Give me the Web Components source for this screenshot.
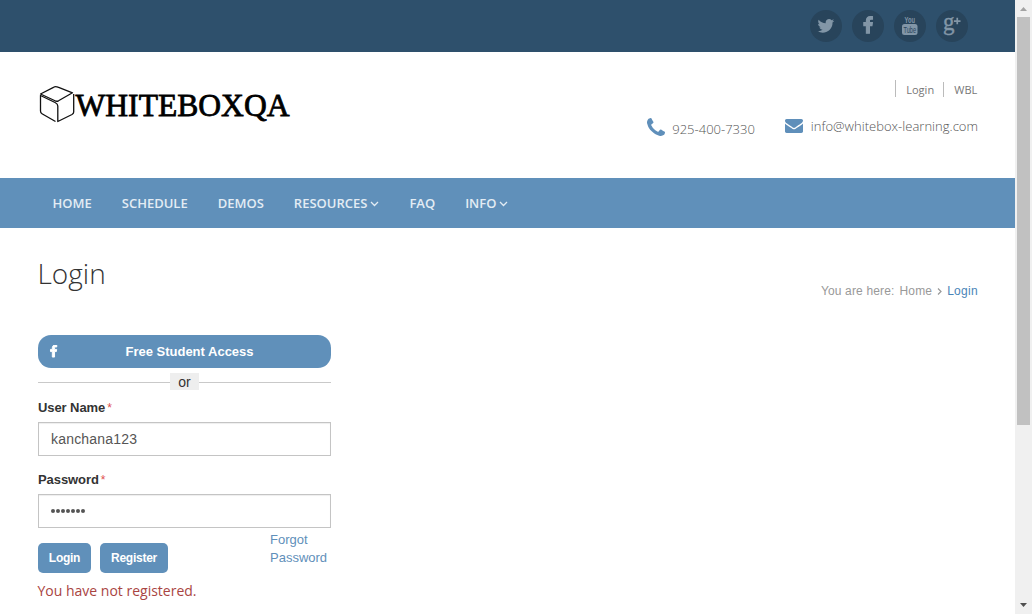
<!DOCTYPE html>
<html lang="en">
<head>
<meta charset="utf-8">
<title>Login</title>
<style>
html,body{margin:0;height:100%;overflow:hidden;background:#fff}
body{font-family:"Open Sans",sans-serif;color:#777}
</style>
</head>
<body>
<wb-page></wb-page>
<script>
function define(name, html) {
  customElements.define(name, class extends HTMLElement {
    constructor() {
      super();
      this.attachShadow({ mode: 'open' }).innerHTML = html;
    }
  });
}

define('social-link', `<style>
:host{display:flex;width:32px;height:32px;border-radius:50%;background:#28445b;color:#8296a7;align-items:center;justify-content:center}
</style><slot></slot>`);

define('top-bar', `<style>
:host{display:flex;justify-content:flex-end;gap:10px;height:52px;box-sizing:border-box;padding:10px 47px 0 0;background:#2e506c}
svg{display:block;fill:currentColor;overflow:visible}
</style>
<social-link><svg width="19" height="19" viewBox="60 60 1792 1792"><path d="M1684 408q-67 98-162 167 1 14 1 42 0 130-38 259.500t-115.500 248.500-184.500 210.500-258 146-323 54.500q-271 0-496-145 35 4 78 4 225 0 401-138-105-2-188-64.500t-114-159.500q33 5 61 5 43 0 85-11-112-23-185.500-111.500t-73.500-205.500v-4q68 38 146 41-66-44-105-115t-39-154q0-88 44-163 121 149 294.500 238.500t371.500 99.500q-8-38-8-74 0-134 94.500-228.500t228.500-94.500q140 0 236 102 109-21 205-78-37 115-142 178 93-10 186-50z"/></svg></social-link>
<social-link><svg width="18" height="18" viewBox="0 50 1792 1792"><path stroke="currentColor" stroke-width="110" d="M1343 12v264h-157q-86 0-116 36t-30 108v189h293l-39 296h-254v759h-306v-759h-255v-296h255v-218q0-186 104-288.500t277-102.500q147 0 228 12z"/></svg></social-link>
<social-link><svg width="32" height="32" viewBox="0 0 32 32"><text x="10.500" y="13.200" font-family="Liberation Sans" font-weight="bold" font-size="9.500" textLength="10.500" lengthAdjust="spacingAndGlyphs">You</text><rect x="8" y="14" width="15.500" height="11" rx="2.500"/><text x="9.500" y="22.700" fill="#28445b" font-family="Liberation Sans" font-size="9" textLength="12.500" lengthAdjust="spacingAndGlyphs">Tube</text></svg></social-link>
<social-link><svg width="32" height="32" viewBox="0 0 32 32"><text x="7" y="20" font-family="Liberation Serif" font-size="25" stroke="currentColor" stroke-width=".4" textLength="11.500" lengthAdjust="spacingAndGlyphs">g</text><path d="M18 10.200h6.500v1.700H18zM20.400 7.700h1.700v6.500h-1.700z"/></svg></social-link>`);

define('site-logo', `<style>:host{display:block;width:252px;height:40px}svg{display:block;overflow:visible}</style>
<svg width="252" height="40" viewBox="0 0 252 40"><g fill="none" stroke="#111" stroke-width="1.300" stroke-linejoin="round"><path d="M2.500 10 L15.500 3.300Q17.500 2 20 3.200L34.500 8.800 20.500 16.800Q18.500 17.800 16.500 16.500Z"/><path d="M17.500 37.500 4 29.800Q2.500 29 2.500 27V11.500L17 18.500Q19.800 19.800 19.800 22V37.500L34 30.500Q35.700 29.500 35.700 28V10"/></g><text x="37.500" y="31.500" font-family="Liberation Serif" font-size="32.500" fill="#000" stroke="#000" stroke-width=".8" textLength="214" lengthAdjust="spacingAndGlyphs">WHITEBOXQA</text></svg>`);

define('site-header', `<style>
:host{display:flex;justify-content:space-between;height:126px;box-sizing:border-box;padding:0 37px 0 38px}
site-logo{margin-top:32px}
.right{display:flex;flex-direction:column;align-items:flex-end}
.links{display:flex;font-size:11px;line-height:16px;margin-top:28px;height:18px;letter-spacing:.05px}
.links span{border-left:1px solid #bbb;padding-left:10px;height:17px;padding-top:2px;box-sizing:border-box;margin-left:9px}
.links span+span{margin-top:2px;padding-top:0;height:15px;line-height:15px;padding-right:.6px}
.contact{display:flex;margin-top:17px;font-size:13px;font-weight:300;line-height:20px;color:#555}
.contact div{display:flex}
.tel{margin:4px 30px 0 0;gap:7px}.mail{gap:8px;margin-top:1px;letter-spacing:.02px}
svg{fill:#5f8fba;display:block}
</style>
<site-logo></site-logo>
<div class="right">
<div class="links"><span>Login</span><span>WBL</span></div>
<div class="contact"><div class="tel"><svg style="margin-top:-1px" width="18" height="18" viewBox="192 128 1408 1408"><path d="M1600 1240q0 27-10 70.500t-21 68.500q-21 50-122 106-94 51-186 51-27 0-53-3.500t-57.500-12.500-47-14.500-55.500-20.500-49-18q-98-35-175-83-127-79-264-216t-216-264q-48-77-83-175-3-9-18-49t-20.500-55.500-14.500-47-12.500-57.500-3.500-53q0-92 51-186 56-101 106-122 25-11 68.500-21t70.500-10q14 0 21 3 18 6 53 76 11 19 30 54t35 63.500 31 53.500q3 4 17.500 25t21.500 35.500 7 28.500q0 20-28.500 50t-62 55-62 53-28.500 46q0 9 5 22.500t8.500 20.500 14 24 11.500 19q76 137 174 235t235 174q2 1 19 11.500t24 14 20.500 8.500 22.500 5q18 0 46-28.500t53-62 55-62 50-28.500q14 0 28.500 7t35.500 21.500 25 17.500q25 15 53.500 31t63.500 35 54 30q70 35 76 53 3 7 3 21z"/></svg><span>925-400-7330</span></div>
<div class="mail"><svg style="margin-top:3px" width="18" height="14" viewBox="0 256 1792 1408" preserveAspectRatio="none"><path d="M1792 710v794q0 66-47 113t-113 47h-1472q-66 0-113-47t-47-113v-794q44 49 101 87 362 246 497 345 57 42 92.500 65.500t94.500 48 110 24.500h2q51 0 110-24.500t94.500-48 92.500-65.500q170-123 498-345 57-39 100-87zm0-294q0 79-49 151t-122 123q-376 261-468 325-10 7-42.500 31t-54 38.500-52 32.500-57.500 27-50 9h-2q-23 0-50-9t-57.500-27-52-32.500-54-38.500-42.500-31q-91-64-262-182.500t-205-142.500q-62-42-117-115.500t-55-136.500q0-78 41.500-130t118.500-52h1472q65 0 112.500 47t47.500 113z"/></svg><span>info@whitebox-learning.com</span></div></div>
</div>`);

define('nav-item', `<style>
:host{display:flex;align-items:center;gap:3px}
svg{display:none;fill:none;stroke:currentColor;stroke-width:1.300;margin-top:1px}
:host([menu]) svg{display:block}
</style><slot></slot><svg width="9" height="6" viewBox="0 0 9 6"><path d="M1 1l3.500 3.500L8 1"/></svg>`);

define('nav-bar', `<style>
:host{display:flex;gap:30px;height:50px;padding-left:52.500px;background:#6090ba;color:#e3ecf4;font-size:13px;font-weight:600}
</style><nav-item>HOME</nav-item><nav-item>SCHEDULE</nav-item><nav-item>DEMOS</nav-item><nav-item menu>RESOURCES</nav-item><nav-item>FAQ</nav-item><nav-item menu>INFO</nav-item>`);

define('page-title', `<style>
:host{display:flex;justify-content:space-between;height:107px;box-sizing:border-box;padding:25px 37px 0 37.500px}
h1{margin:0;font-size:28px;line-height:40px;font-weight:300;color:#333}
.crumbs{display:flex;margin-top:30px;font:12px/16px "Liberation Sans",sans-serif;letter-spacing:.15px;color:#999;height:16px}
.crumbs svg{margin:5px 5px 0 5px}
b{font-weight:400;color:#4a84b8;letter-spacing:.3px}
</style><h1>Login</h1><div class="crumbs"><span style="margin-right:5px">You are here:</span><span>Home</span><svg width="5" height="7" viewBox="0 0 5 7" fill="none" stroke="#999" stroke-width="1.200"><path d="M1 .5l3 3-3 3"/></svg><b>Login</b></div>`);

define('text-field', `<style>
:host{display:block;margin-bottom:14px;font-family:"Liberation Sans",sans-serif}
.label{display:block;font-size:13px;font-weight:700;line-height:18px;height:18px;padding-top:1px;color:#333;letter-spacing:-.08px}
i{font-style:normal;font-weight:400;font-size:12px;color:#e04f4f;margin-left:2px;vertical-align:0}
.box{display:flex;align-items:center;height:34px;box-sizing:border-box;border:1px solid #c4c4c4;padding:0 12px;margin-top:5px;font-size:14px;letter-spacing:.2px;color:#555;box-shadow:inset 0 1px 1px rgba(0,0,0,.07)}
</style><span class="label"><slot name="label"></slot><i>*</i></span><div class="box"><slot></slot></div>`);

define('push-button', `<style>
:host{display:flex;align-items:center;justify-content:center;height:30px;border-radius:5px;background:#6090ba;color:#fff;font:bold 12px "Liberation Sans",sans-serif;letter-spacing:-.25px}
</style><slot></slot>`);

define('login-form', `<style>
:host{display:block;width:293px;margin-left:38px;font-family:"Liberation Sans",sans-serif}
.fb{display:grid;grid-template-columns:30px 1fr 20px;align-items:center;height:33px;border-radius:13px;background:#6090ba;color:#fff;font-size:13px;font-weight:700;text-align:center}
.fb svg{fill:#fff;stroke:#fff;stroke-width:130;margin-left:9px}
.or{display:grid;grid-template-columns:1fr 29px 1fr;align-items:center;margin:5px 0 7px;height:18px;font-size:14px;color:#333;text-align:center}
.or i{height:1px;background:#c9c9c9}.or span{background:#eee;margin-top:-1px;line-height:16px;padding-top:1px}
.row{display:flex;height:53px}
.row push-button{margin:15px 9px 0 0}
.forgot{margin-left:auto;width:61px;margin-top:3px;font-size:13px;line-height:18px;color:#5f8fba}
.dots{display:flex;gap:1px}.dots i{width:4px;height:4px;border-radius:50%;background:#555}
p{margin:0 0 0 -.500px;font:14px/19px "Open Sans",sans-serif;color:#a94442;white-space:nowrap}
</style>
<div class="fb"><svg width="13" height="13" viewBox="0 0 1792 1792"><path d="M1343 12v264h-157q-86 0-116 36t-30 108v189h293l-39 296h-254v759h-306v-759h-255v-296h255v-218q0-186 104-288.500t277-102.500q147 0 228 12z"/></svg><span>Free Student Access</span></div>
<div class="or"><i></i><span>or</span><i></i></div>
<text-field><span slot="label">User Name</span>kanchana123</text-field>
<text-field style="margin-bottom:0"><span slot="label">Password</span><span class="dots"><i></i><i></i><i></i><i></i><i></i><i></i><i></i></span></text-field>
<div class="row"><push-button style="width:53px">Login</push-button><push-button style="width:68px">Register</push-button><div class="forgot">Forgot<br>Password</div></div>
<p>You have not registered.</p>`);

define('scroll-rail', `<style>
:host{display:flex;flex-direction:column;align-items:center;width:17px;height:614px;background:#f0f0f0}
.thumb{width:13px;height:408px;background:#c1c1c1}
svg{display:block}
.down{margin-top:auto}
</style><svg width="17" height="17"><path d="M5 11h7L8.500 7z" fill="#a3a3a3"/></svg><div class="thumb"></div><svg class="down" width="17" height="17"><path d="M5 6h7L8.500 10z" fill="#505050"/></svg>`);

define('wb-page', `<style>
:host{display:flex;width:1032px;height:614px;overflow:hidden}
main{width:1015px;background:#fff}
</style><main><top-bar></top-bar><site-header></site-header><nav-bar></nav-bar><page-title></page-title><login-form></login-form></main><scroll-rail></scroll-rail>`);
</script>
</body>
</html>
